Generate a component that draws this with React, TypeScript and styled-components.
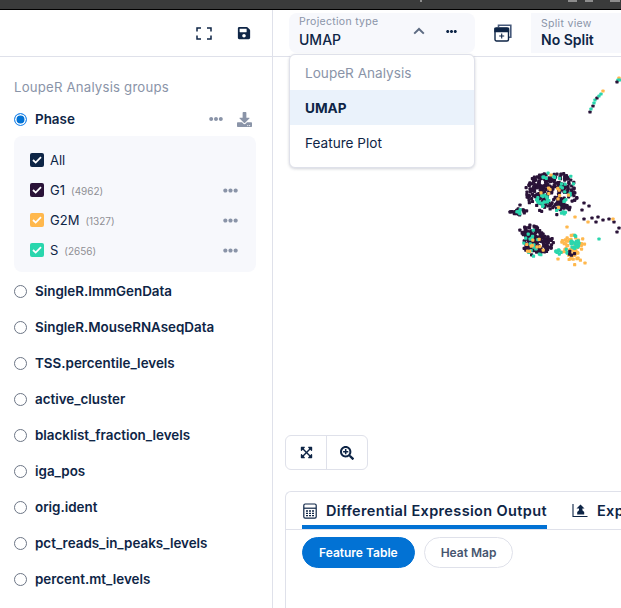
import React from 'react'
import styled, { createGlobalStyle } from 'styled-components'
import { FaSave, FaDownload, FaEllipsisH, FaExpandArrowsAlt, FaSearchPlus } from 'react-icons/fa'

const navy = '#0e2546'
const muted = '#8a94a8'
const line = '#dfe1ea'
const soft = '#f7f8fc'
const blue = '#0272d4'

const GlobalStyle = createGlobalStyle`
  html, body { margin: 0; padding: 0; background: #fff; }
  body { width: 621px; height: 608px; overflow: hidden; font-family: Inter, "Liberation Sans", sans-serif; color: ${navy}; }
`

const Page = styled.div`
  width: 621px;
  height: 608px;
  display: flex;
  flex-direction: column;
  overflow: hidden;
`

const WindowBar = styled.div`
  height: 9px;
  flex: none;
  background: #3a3b3b;
  border-bottom: 1px solid #000;
  display: flex;
  align-items: flex-start;
  justify-content: flex-end;
  padding-right: 1px;
`

const WindowMark = styled.span<{ $w: number; $after?: number }>`
  width: ${p => p.$w}px;
  height: 2px;
  margin-right: ${p => p.$after ?? 0}px;
  background: #8d8d8d;
`

const Columns = styled.div`
  flex: 1;
  display: flex;
  min-height: 0;
`

const Sidebar = styled.aside`
  width: 272px;
  flex: none;
  border-right: 1px solid ${line};
`

const SidebarHead = styled.div`
  height: 46px;
  border-bottom: 1px solid ${line};
  display: flex;
  align-items: center;
  justify-content: flex-end;
  gap: 25px;
  padding-right: 21px;
`

const SidebarBody = styled.div`
  padding: 20px 16px 0 14px;
`

const GroupsTitle = styled.div`
  font-size: 13.2px;
  line-height: 20px;
  color: ${muted};
  letter-spacing: 0.2px;
  margin-bottom: 12px;
`

const GroupRow = styled.div<{ $tight?: boolean }>`
  display: flex;
  align-items: center;
  height: 20px;
  margin-bottom: ${p => (p.$tight ? 7 : 16)}px;
`

const Radio = styled.span<{ $on?: boolean }>`
  width: 13px;
  height: 13px;
  box-sizing: border-box;
  border-radius: 50%;
  flex: none;
  margin-right: 8px;
  background: ${p => (p.$on ? blue : '#fff')};
  border: 1px solid ${p => (p.$on ? '#2a8cf0' : '#6d7686')};
  box-shadow: ${p => (p.$on ? 'inset 0 0 0 1.5px #fff' : 'none')};
`

const GroupName = styled.span`
  font-size: 13.4px;
  font-weight: 600;
  flex: 1;
`

const RowIcons = styled.span`
  display: flex;
  align-items: center;
  gap: 14px;
  padding-right: 4px;
  color: ${muted};
`

const ValuesBox = styled.div`
  background: ${soft};
  border-radius: 8px;
  height: 136px;
  box-sizing: border-box;
  padding: 9px 18px 0 16px;
  margin-bottom: 9px;
`

const ValueRow = styled.div`
  display: flex;
  align-items: center;
  height: 30px;
`

const Check = styled.span<{ $color: string }>`
  width: 14px;
  height: 14px;
  border-radius: 2px;
  flex: none;
  margin-right: 6px;
  background: ${p => p.$color};
  display: flex;
  align-items: center;
  justify-content: center;
`

const ValueName = styled.span`
  font-size: 13px;
  margin-right: 6px;
`

const Count = styled.span`
  font-size: 10px;
  color: #8f8f94;
  flex: 1;
  padding-top: 2px;
`

const Dots = styled(FaEllipsisH)`
  color: ${muted};
`

const Main = styled.main`
  flex: 1;
  min-width: 0;
  display: flex;
  flex-direction: column;
`

const Toolbar = styled.div`
  flex: none;
  height: 43px;
  border-bottom: 1px solid ${line};
  display: flex;
  align-items: flex-start;
  padding: 3px 0 0 16px;
  position: relative;
`

const Selector = styled.div`
  width: 186px;
  height: 40px;
  flex: none;
  box-sizing: border-box;
  background: ${soft};
  border-radius: 8px;
  padding: 2px 10px 0;
  display: flex;
`

const SelectorText = styled.div`
  flex: 1;
`

const Caption = styled.div`
  font-size: 10.5px;
  line-height: 14px;
  color: ${muted};
  letter-spacing: 0.3px;
`

const Chosen = styled.div<{ $bold?: boolean }>`
  font-size: 14px;
  line-height: 20px;
  margin-top: ${p => (p.$bold ? -1 : 1)}px;
  font-weight: ${p => (p.$bold ? 600 : 500)};
`

const SelectorIcons = styled.div`
  display: flex;
  align-items: center;
  gap: 21px;
  padding: 0 8px 6px 0;
`

const StackButton = styled.div`
  width: 56px;
  height: 40px;
  flex: none;
  display: flex;
  align-items: center;
  justify-content: center;
`

const SplitBox = styled.div`
  flex: 1;
  background: ${soft};
  height: 40px;
  box-sizing: border-box;
  padding: 4px 0 0 10px;
  white-space: nowrap;
  overflow: hidden;
`

const Menu = styled.div`
  position: absolute;
  left: 16px;
  top: 44px;
  width: 186px;
  height: 114px;
  box-sizing: border-box;
  background: #fff;
  border: 1px solid ${line};
  border-radius: 6px;
  box-shadow: 0 1px 3px rgba(30, 40, 70, 0.2);
  z-index: 5;
`

const MenuItem = styled.div<{ $state?: 'head' | 'active' }>`
  height: 35px;
  display: flex;
  align-items: center;
  padding-left: 15px;
  font-size: 13.6px;
  background: ${p => (p.$state === 'active' ? '#eaf2fb' : 'transparent')};
  color: ${p => (p.$state === 'head' ? muted : navy)};
  font-weight: ${p => (p.$state === 'active' ? 700 : 400)};
`

const PlotArea = styled.div`
  height: 413px;
  flex: none;
  position: relative;
`

const Scatter = styled.svg`
  position: absolute;
  inset: 0;
  width: 100%;
  height: 100%;
`

const PlotTools = styled.div`
  position: absolute;
  left: 12px;
  bottom: 0;
  height: 35px;
  width: 83px;
  box-sizing: border-box;
  border: 1px solid ${line};
  border-radius: 6px;
  background: #fff;
  display: flex;
`

const PlotTool = styled.div`
  flex: 1;
  display: flex;
  align-items: center;
  justify-content: center;
  & + & { border-left: 1px solid ${line}; }
`

const OutputCard = styled.section`
  flex: 1;
  margin: 21px 0 0 12px;
  border: 1px solid ${line};
  border-right: none;
  border-bottom: none;
  border-radius: 6px 0 0 0;
`

const TabRow = styled.div`
  display: flex;
  height: 38px;
  box-sizing: border-box;
  border-bottom: 1px solid ${line};
  padding-left: 16px;
  white-space: nowrap;
  overflow: hidden;
`

const Tab = styled.div<{ $active?: boolean }>`
  display: flex;
  align-items: center;
  gap: 9px;
  height: 37px;
  flex: none;
  box-sizing: border-box;
  padding: 4px 0 0 1px;
  margin-right: 24px;
  font-size: 14.5px;
  font-weight: 600;
  letter-spacing: 0.36px;
  border-bottom: 4px solid ${p => (p.$active ? blue : 'transparent')};
`

const PillRow = styled.div`
  display: flex;
  gap: 9px;
  padding: 7px 0 0 16px;
`

const Pill = styled.div<{ $active?: boolean }>`
  height: 31px;
  box-sizing: border-box;
  display: flex;
  align-items: center;
  justify-content: center;
  border-radius: 16px;
  font-size: 12px;
  font-weight: 600;
  padding: 0 16px;
  background: ${p => (p.$active ? blue : '#fff')};
  color: ${p => (p.$active ? '#fff' : '#47566f')};
  border: 1px solid ${p => (p.$active ? blue : line)};
`

const CheckMark = () => (
  <svg width="10" height="8" viewBox="0 0 10 8" fill="none">
    <path d="M1 4l2.7 2.6L9 1.2" stroke="#fff" strokeWidth="1.8" />
  </svg>
)

const FullscreenIcon = () => (
  <svg width="16" height="13" viewBox="0 0 16 13" fill="none" stroke={navy} strokeWidth="1.5">
    <path d="M5 1H1v3.5M11 1h4v3.5M5 12H1V8.5M11 12h4V8.5" />
  </svg>
)

const ChevronIcon = () => (
  <svg width="12" height="8" viewBox="0 0 12 8" fill="none" stroke="#5d6b82" strokeWidth="2">
    <path d="M1.2 6.6L6 2l4.8 4.6" />
  </svg>
)

const StackIcon = () => (
  <svg width="18" height="18" viewBox="0 0 18 18" fill="none" stroke={navy} strokeWidth="1.4">
    <path d="M4.5 3V1.2h12.3v12h-2" strokeWidth="1.6" stroke="#46597a" />
    <rect x="1" y="4" width="13.5" height="13" rx="1.5" />
    <path d="M1 4.5h13.5v3H1z" fill={navy} />
    <path d="M7.7 9.5v5M5.2 12h5" strokeWidth="1.1" />
  </svg>
)

const CalculatorIcon = () => (
  <svg width="14" height="16" viewBox="0 0 14 16" fill="none" stroke={navy} strokeWidth="1.2">
    <rect x="0.8" y="1" width="12.4" height="14.2" rx="1.4" />
    <path d="M1 5.2h12" />
    <path d="M3 8h2M6 8h2M9 8h2M3 10.3h2M6 10.3h2M9 10.3h2M3 12.6h2M6 12.6h2M9 12.6h2" strokeWidth="1.3" />
  </svg>
)

const ExportIcon = () => (
  <svg width="16" height="15" viewBox="0 0 16 15" fill="none" stroke={navy} strokeWidth="1.1">
    <path d="M1 1v12.5h14.5" />
    <path d="M8.5 1.5l4 4H10.4v1.8l1.8 1.8v2.4H5.2V9.1L7 7.3V5.5H4.5z" fill={navy} stroke="none" />
  </svg>
)

// seeded so the cloud looks the same on every render
const rng = (seed: number) => () => {
  seed = (seed + 0x6d2b79f5) | 0
  let t = Math.imul(seed ^ (seed >>> 15), 1 | seed)
  t = (t + Math.imul(t ^ (t >>> 7), 61 | t)) ^ t
  return ((t ^ (t >>> 14)) >>> 0) / 4294967296
}

const PURPLE = '#2a1338'
const TEAL = '#2ad6ad'
const ORANGE = '#ffb84d'

// cx, cy, rx, ry, count, colour
const blobs: [number, number, number, number, number, string][] = [
  [545, 184, 17, 10, 80, PURPLE],
  [561, 183, 14, 10, 60, PURPLE],
  [537, 195, 11, 11, 60, PURPLE],
  [566, 199, 11, 12, 50, PURPLE],
  [552, 205, 14, 8, 40, PURPLE],
  [550, 177, 12, 4, 8, TEAL],
  [543, 200, 7, 5, 20, TEAL],
  [566, 190, 9, 12, 12, TEAL],
  [563, 210, 8, 4, 7, TEAL],
  [556, 195, 14, 14, 10, ORANGE],
  [531, 232, 9, 7, 55, PURPLE],
  [540, 243, 12, 10, 85, PURPLE],
  [529, 245, 7, 8, 35, PURPLE],
  [531, 240, 8, 8, 14, TEAL],
  [538, 253, 9, 3, 5, TEAL],
  [535, 248, 14, 8, 10, ORANGE],
  [520, 212, 10, 2.5, 16, PURPLE],
  [517, 212, 6, 2, 6, TEAL],
  [573, 248, 10, 13, 60, ORANGE],
  [575, 243, 4, 6, 22, TEAL],
  [562, 252, 7, 3, 12, TEAL],
  [571, 254, 3, 3, 4, PURPLE],
]

const singles: [number, number, string][] = [
  [551, 175, ORANGE], [584, 203, PURPLE], [589, 206, PURPLE], [582, 210, PURPLE], [584, 219, PURPLE],
  [592, 218, PURPLE], [598, 217, PURPLE], [596, 222, PURPLE], [603, 220, PURPLE], [609, 219, PURPLE],
  [614, 222, PURPLE], [613, 219, ORANGE], [619, 228, PURPLE], [617, 232, PURPLE], [588, 222, ORANGE],
  [599, 239, TEAL], [558, 259, ORANGE], [585, 263, ORANGE], [578, 258, ORANGE], [513, 212, PURPLE],
  [510, 212, PURPLE], [520, 205, PURPLE], [575, 217, ORANGE], [567, 227, ORANGE], [590, 112, PURPLE],
  [591, 109, TEAL], [593, 106, PURPLE], [594, 103, TEAL], [595, 100, TEAL], [597, 98, PURPLE],
  [599, 96, TEAL], [601, 94, TEAL], [603, 91, ORANGE], [619, 78, ORANGE], [618, 80, TEAL],
  [617, 82, PURPLE], [620, 80, TEAL],
]

const makePoints = () => {
  const r = rng(42)
  const pts: { x: number; y: number; c: string }[] = []
  blobs.forEach(([cx, cy, rx, ry, n, c]) => {
    for (let i = 0; i < n; i++) {
      const a = r() * Math.PI * 2
      // a few strays past the blob edge, so the outline stays rough
      const d = r() < 0.1 ? 1 + r() * 0.3 : Math.sqrt(r())
      pts.push({ x: cx + Math.cos(a) * d * rx, y: cy + Math.sin(a) * d * ry, c })
    }
  })
  singles.forEach(([x, y, c]) => pts.push({ x, y, c }))
  return pts
}

const points = makePoints()

const groups = [
  'SingleR.ImmGenData',
  'SingleR.MouseRNAseqData',
  'TSS.percentile_levels',
  'active_cluster',
  'blacklist_fraction_levels',
  'iga_pos',
  'orig.ident',
  'pct_reads_in_peaks_levels',
  'percent.mt_levels',
]

const values = [
  { name: 'All', color: navy },
  { name: 'G1', count: '(4962)', color: PURPLE },
  { name: 'G2M', count: '(1327)', color: ORANGE },
  { name: 'S', count: '(2656)', color: TEAL },
]

const App: React.FC = () => {
  return (
    <Page>
      <GlobalStyle />
      <WindowBar>
        <WindowMark $w={2} $after={146} />
        <WindowMark $w={9} $after={8} />
        <WindowMark $w={8} $after={17} />
        <WindowMark $w={10} />
      </WindowBar>
      <Columns>
        <Sidebar>
          <SidebarHead>
            <FullscreenIcon />
            <FaSave size={14} color={navy} />
          </SidebarHead>
          <SidebarBody>
            <GroupsTitle>LoupeR Analysis groups</GroupsTitle>
            <GroupRow $tight>
              <Radio $on />
              <GroupName>Phase</GroupName>
              <RowIcons>
                <FaEllipsisH size={14} />
                <FaDownload size={15} />
              </RowIcons>
            </GroupRow>
            <ValuesBox>
              {values.map(v => (
                <ValueRow key={v.name}>
                  <Check $color={v.color}>
                    <CheckMark />
                  </Check>
                  <ValueName>{v.name}</ValueName>
                  {v.count && <Count>{v.count}</Count>}
                  {v.count && <Dots size={15} />}
                </ValueRow>
              ))}
            </ValuesBox>
            {groups.map(g => (
              <GroupRow key={g}>
                <Radio />
                <GroupName>{g}</GroupName>
              </GroupRow>
            ))}
          </SidebarBody>
        </Sidebar>
        <Main>
          <Toolbar>
            <Selector>
              <SelectorText>
                <Caption>Projection type</Caption>
                <Chosen>UMAP</Chosen>
              </SelectorText>
              <SelectorIcons>
                <ChevronIcon />
                <FaEllipsisH size={11} color={navy} />
              </SelectorIcons>
            </Selector>
            <StackButton>
              <StackIcon />
            </StackButton>
            <SplitBox>
              <Caption>Split view</Caption>
              <Chosen $bold>No Split</Chosen>
            </SplitBox>
            <Menu>
              <MenuItem $state="head">LoupeR Analysis</MenuItem>
              <MenuItem $state="active">UMAP</MenuItem>
              <MenuItem>Feature Plot</MenuItem>
            </Menu>
          </Toolbar>
          <PlotArea>
            <Scatter>
              <g transform="translate(-273 -57)">
                {points.map((p, i) => (
                  <rect key={i} x={p.x - 1.6} y={p.y - 1.6} width="3.2" height="3.2" rx="0.9" fill={p.c} />
                ))}
              </g>
            </Scatter>
            <PlotTools>
              <PlotTool>
                <FaExpandArrowsAlt size={13} color={navy} />
              </PlotTool>
              <PlotTool>
                <FaSearchPlus size={14} color={navy} />
              </PlotTool>
            </PlotTools>
          </PlotArea>
          <OutputCard>
            <TabRow>
              <Tab $active>
                <CalculatorIcon />
                Differential Expression Output
              </Tab>
              <Tab>
                <ExportIcon />
                Exp
              </Tab>
            </TabRow>
            <PillRow>
              <Pill $active>Feature Table</Pill>
              <Pill>Heat Map</Pill>
            </PillRow>
          </OutputCard>
        </Main>
      </Columns>
    </Page>
  )
}

export default App
